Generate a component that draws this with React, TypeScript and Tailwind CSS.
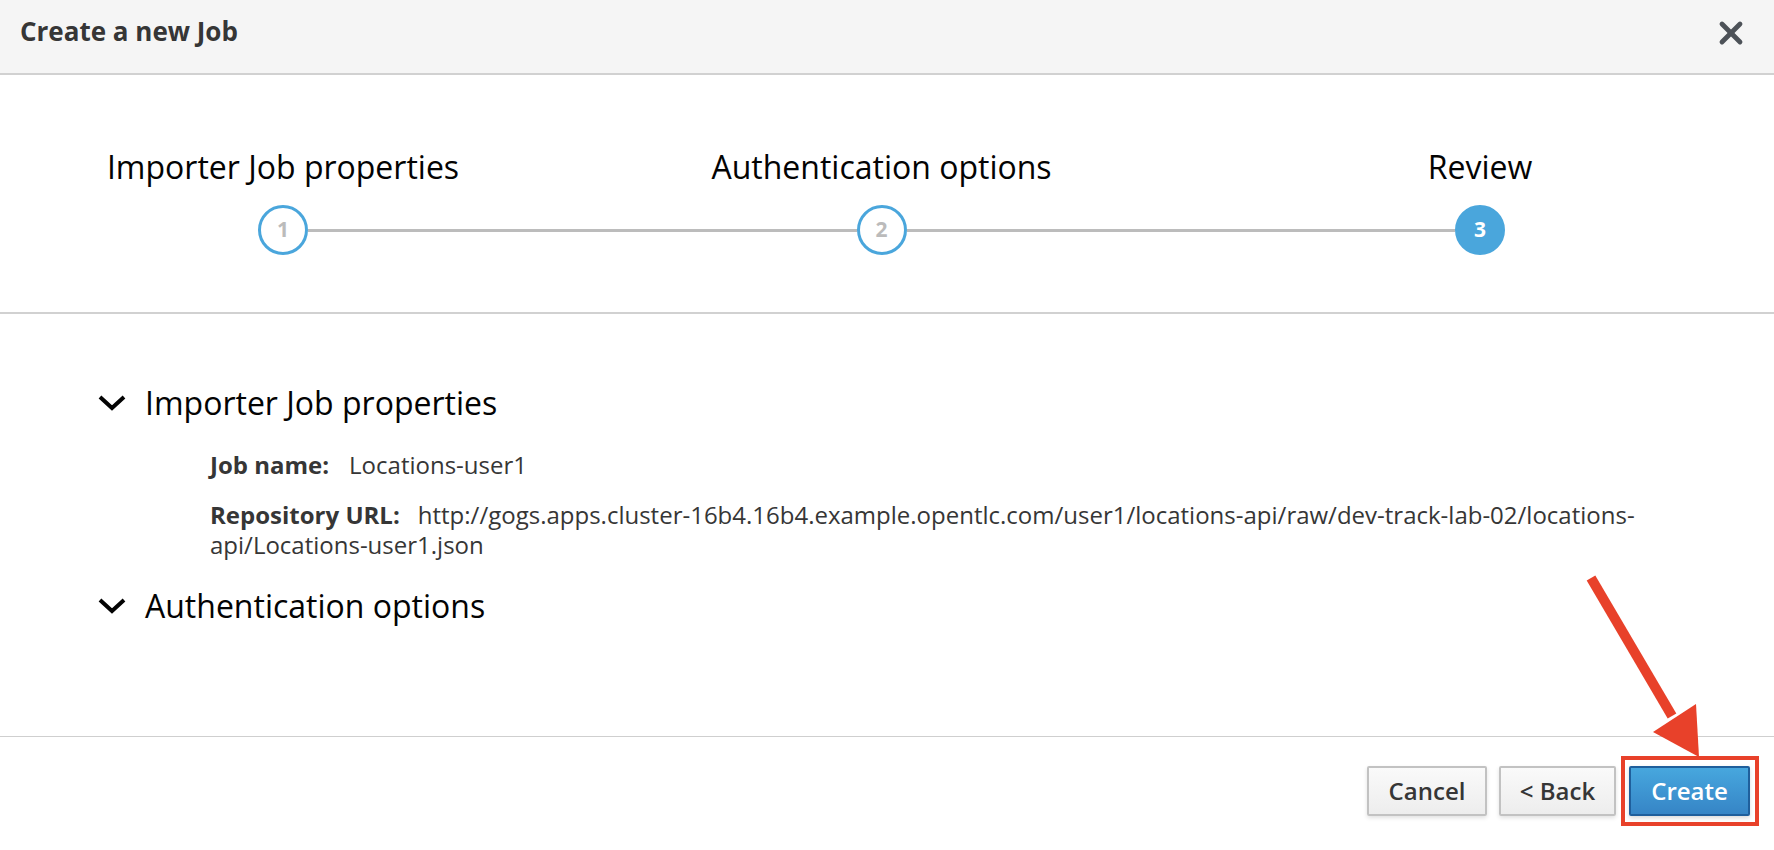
import { X } from "lucide-react";

const steps = [
  { n: 1, label: "Importer Job properties", active: false },
  { n: 2, label: "Authentication options", active: false },
  { n: 3, label: "Review", active: true },
];

const Chevron = () => (
  <svg width="28" height="16" viewBox="0 0 28 16" className="shrink-0">
    <polyline
      points="2,2 14,13 26,2"
      fill="none"
      stroke="#030303"
      strokeWidth="4"
      strokeLinejoin="miter"
    />
  </svg>
);

const StepCircle = ({ n, active }: { n: number; active: boolean }) => (
  <div
    className={
      active
        ? "flex h-[50px] w-[50px] shrink-0 items-center justify-center rounded-full border-[3px] border-[#4aa6dc] bg-[#4aa6dc] text-[21px] font-bold text-white"
        : "flex h-[50px] w-[50px] shrink-0 items-center justify-center rounded-full border-[3px] border-[#4aa6dc] bg-white text-[21px] font-bold text-[#bbbbbb]"
    }
  >
    {n}
  </div>
);

export default function App() {
  return (
    <div
      className="relative flex h-[850px] w-full flex-col overflow-hidden bg-white"
      style={{ fontFamily: '"Open Sans", "Liberation Sans", sans-serif' }}
    >
      {/* header */}
      <div className="flex h-[75px] items-start justify-between border-b-2 border-[#d1d1d1] bg-[#f5f5f5] pl-[20px] pr-[25px] pt-[13px]">
        <h1 className="text-[26px] font-bold leading-[36px] text-[#363636]">
          Create a new Job
        </h1>
        <X className="mt-[2px] h-[36px] w-[36px] text-[#4d5258]" strokeWidth={3.2} />
      </div>

      {/* stepper */}
      <div className="border-b-2 border-[#d1d1d1] pb-[57px] pt-[72px]">
        <div className="ml-[258px] w-[1247px]">
          <div className="flex justify-between">
            {steps.map((s) => (
              <div key={s.n} className="flex w-[50px] justify-center">
                <span className="whitespace-nowrap text-[32px] leading-[40px] text-[#030303]">
                  {s.label}
                </span>
              </div>
            ))}
          </div>
          <div className="mt-[18px] flex items-center">
            <StepCircle n={1} active={false} />
            <div className="h-[3px] flex-1 bg-[#bcbcbc]" />
            <StepCircle n={2} active={false} />
            <div className="h-[3px] flex-1 bg-[#bcbcbc]" />
            <StepCircle n={3} active={true} />
          </div>
        </div>
      </div>

      {/* review */}
      <div className="flex-1 pl-[98px] pr-[130px] pt-[69px]">
        <div className="flex items-center gap-[19px]">
          <Chevron />
          <h2 className="text-[32px] leading-[40px] text-[#030303]">Importer Job properties</h2>
        </div>
        <div className="ml-[112px] mt-[27px] text-[24px] leading-[30px] text-[#363636]">
          <p>
            <span className="font-bold">Job name:</span>
            <span className="ml-[20px]">Locations-user1</span>
          </p>
          <p className="mt-[20px]">
            <span className="mr-[18px] font-bold">Repository URL:</span>
            http://gogs.apps.cluster-16b4.16b4.example.opentlc.com/user1/locations-api/raw/dev-track-lab-02/locations-
            <br />
            api/Locations-user1.json
          </p>
        </div>
        <div className="mt-[26px] flex items-center gap-[19px]">
          <Chevron />
          <h2 className="text-[32px] leading-[40px] text-[#030303]">Authentication options</h2>
        </div>
      </div>

      {/* footer */}
      <div className="flex h-[114px] items-start justify-end border-t border-[#cfcfcf] pr-[24px] pt-[29px]">
        <button className="h-[50px] w-[120px] rounded-[2px] border-2 border-[#c2c2c2] bg-gradient-to-b from-[#fafafa] to-[#ededed] text-[24px] font-semibold text-[#363636] shadow-[0_2px_4px_rgba(0,0,0,0.12)]">
          Cancel
        </button>
        <button className="ml-[12px] h-[50px] w-[117px] rounded-[2px] border-2 border-[#c2c2c2] bg-gradient-to-b from-[#fafafa] to-[#ededed] text-[24px] font-semibold text-[#363636] shadow-[0_2px_4px_rgba(0,0,0,0.12)]">
          &lt; Back
        </button>
        <button className="relative ml-[13px] h-[50px] w-[121px] rounded-[2px] border-2 border-[#1f5f9c] bg-gradient-to-b from-[#47a7de] to-[#3685c6] text-[24px] font-semibold text-white shadow-[0_2px_4px_rgba(0,0,0,0.15)]">
          Create
          <span className="pointer-events-none absolute -bottom-[12px] -left-[10px] -right-[11px] -top-[12px] border-4 border-[#e8412a]" />
        </button>
      </div>

      {/* annotation arrow */}
      <svg
        className="pointer-events-none absolute left-0 top-0"
        width="1774"
        height="850"
        viewBox="0 0 1774 850"
      >
        <line x1="1591" y1="578" x2="1672" y2="716" stroke="#e8412a" strokeWidth="10" />
        <polygon points="1653,732 1696,704 1699,757" fill="#e8412a" />
      </svg>
    </div>
  );
}
